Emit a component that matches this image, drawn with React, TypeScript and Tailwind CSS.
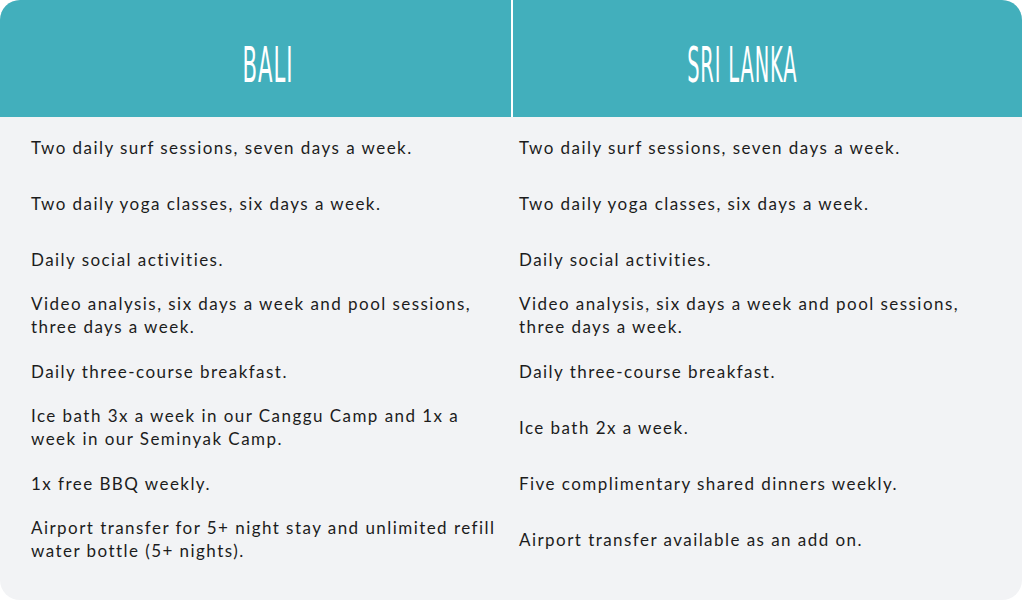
const rows: [string[], string[]][] = [
  [["Two daily surf sessions, seven days a week."], ["Two daily surf sessions, seven days a week."]],
  [["Two daily yoga classes, six days a week."], ["Two daily yoga classes, six days a week."]],
  [["Daily social activities."], ["Daily social activities."]],
  [
    ["Video analysis, six days a week and pool sessions,", "three days a week."],
    ["Video analysis, six days a week and pool sessions,", "three days a week."],
  ],
  [["Daily three-course breakfast."], ["Daily three-course breakfast."]],
  [["Ice bath 3x a week in our Canggu Camp and 1x a", "week in our Seminyak Camp."], ["Ice bath 2x a week."]],
  [["1x free BBQ weekly."], ["Five complimentary shared dinners weekly."]],
  [
    ["Airport transfer for 5+ night stay and unlimited refill", "water bottle (5+ nights)."],
    ["Airport transfer available as an add on."],
  ],
];

const Cell = ({ lines, first }: { lines: string[]; first?: boolean }) => (
  <div className={`flex h-[56px] flex-col justify-center ${first ? "pl-[31px] pr-[6px]" : "pl-[7px] pr-[57px]"}`}>
    {lines.map((l, i) => (
      <span key={i} className="whitespace-nowrap">{l}</span>
    ))}
  </div>
);

export default function App() {
  return (
    <div className="h-[601px] w-[1024px] bg-white">
      <div className="flex h-[600px] w-[1022px] flex-col overflow-hidden rounded-[20px] bg-[#f2f3f5]">
        <div className="grid h-[117px] grid-cols-[511px_2px_509px] bg-[#42afbc] text-white">
          <div className="flex items-center justify-center pl-[31px] pr-[6px] pt-[14px]">
            <span className="scale-x-[0.48] font-['DejaVu_Sans_Condensed',sans-serif] text-[49px] leading-none tracking-[2px]">BALI</span>
          </div>
          <div className="bg-white" />
          <div className="flex items-center justify-center pl-[7px] pr-[57px] pt-[14px]">
            <span className="scale-x-[0.44] font-['DejaVu_Sans_Condensed',sans-serif] text-[49px] leading-none tracking-[2px] whitespace-nowrap">SRI LANKA</span>
          </div>
        </div>
        <div className="grid grid-cols-[512px_510px] pt-[2px] font-['Lato',sans-serif] text-[17px] leading-[23px] tracking-[1.45px] text-[#1c1c1c]">
          {rows.map(([a, b], i) => (
            <div key={i} className="contents">
              <Cell lines={a} first />
              <Cell lines={b} />
            </div>
          ))}
        </div>
      </div>
    </div>
  );
}
